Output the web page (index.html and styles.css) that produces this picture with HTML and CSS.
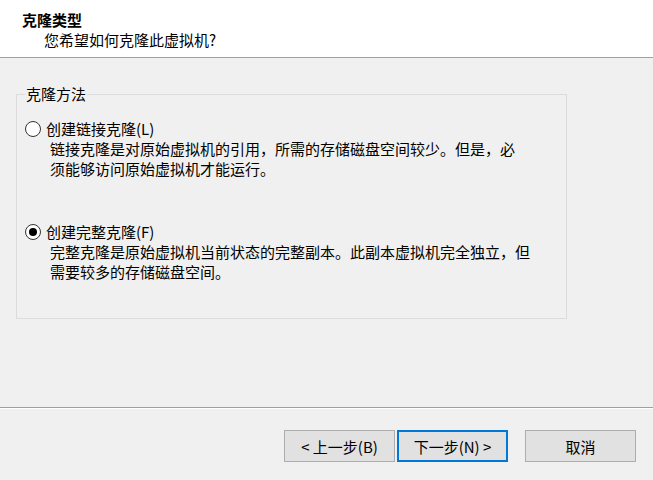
FILE: index.html
```html
<!DOCTYPE html>
<html>
<head>
    <meta charset="UTF-8">
    <title>克隆虚拟机向导</title>
    <link rel="stylesheet" href="styles.css">
</head>
<body>
    <div class="wizard">
        <div class="header">
            <div class="header-title">克隆类型</div>
            <div class="header-sub">您希望如何克隆此虚拟机?</div>
        </div>
        <div class="content">
            <fieldset class="group">
                <legend>克隆方法</legend>
                <div class="option">
                    <div class="option-row">
                        <span class="radio"></span>
                        <span class="option-label">创建链接克隆(L)</span>
                    </div>
                    <div class="option-desc">链接克隆是对原始虚拟机的引用，所需的存储磁盘空间较少。但是，必<br>须能够访问原始虚拟机才能运行。</div>
                </div>
                <div class="option option-second">
                    <div class="option-row">
                        <span class="radio checked"></span>
                        <span class="option-label">创建完整克隆(F)</span>
                    </div>
                    <div class="option-desc">完整克隆是原始虚拟机当前状态的完整副本。此副本虚拟机完全独立，但<br>需要较多的存储磁盘空间。</div>
                </div>
            </fieldset>
        </div>
        <div class="footer">
            <button class="btn">&lt; 上一步(B)</button>
            <button class="btn btn-default">下一步(N) &gt;</button>
            <button class="btn btn-cancel">取消</button>
        </div>
    </div>
</body>
</html>
```

FILE: styles.css
```css
body {
    margin: 0;
    background-color: #f0f0f0;
    font-family: "Noto Sans CJK SC", "Noto Sans", sans-serif;
    font-size: 15px;
    color: #000;
}
.wizard {
    width: 653px;
    height: 480px;
    display: flex;
    flex-direction: column;
}
.header {
    height: 58px;
    background-color: #fff;
    border-bottom: 1px solid #a0a0a0;
    padding-top: 10px;
    box-sizing: border-box;
    line-height: 20px;
}
.header-title {
    font-weight: bold;
    padding-left: 22px;
}
.header-sub {
    padding-left: 44px;
}
.content {
    height: 349px;
    padding: 26px 0 0 16px;
    box-sizing: border-box;
}
.group {
    width: 551px;
    height: 235px;
    margin: 0;
    padding: 15px 8px 0 8px;
    border: 1px solid #dcdcdc;
    box-sizing: border-box;
}
.group legend {
    padding: 0 1px;
    line-height: 20px;
}
.option {
    line-height: 20px;
}
.option-second {
    margin-top: 43px;
}
.option-row {
    display: flex;
    align-items: center;
    height: 20px;
}
.radio {
    flex: none;
    width: 16px;
    height: 16px;
    margin-right: 5px;
    border: 1px solid #333;
    border-radius: 50%;
    background-color: #fff;
    box-sizing: border-box;
    display: flex;
    justify-content: center;
    align-items: center;
}
.radio.checked::before {
    content: "";
    width: 8px;
    height: 8px;
    border-radius: 50%;
    background-color: #000;
}
.option-desc {
    padding-left: 25px;
}
.footer {
    flex: 1;
    border-top: 1px solid #a0a0a0;
    box-shadow: inset 0 1px #fff;
    padding: 22px 17px 0 0;
    display: flex;
    justify-content: flex-end;
    align-items: flex-start;
}
.btn {
    width: 111px;
    height: 32px;
    margin-left: 2px;
    border: 1px solid #adadad;
    background-color: #e1e1e1;
    font-family: inherit;
    font-size: 15px;
    color: #000;
    padding: 0;
}
.btn-default {
    border: 2px solid #0078d7;
}
.btn-cancel {
    margin-left: 17px;
}
```
